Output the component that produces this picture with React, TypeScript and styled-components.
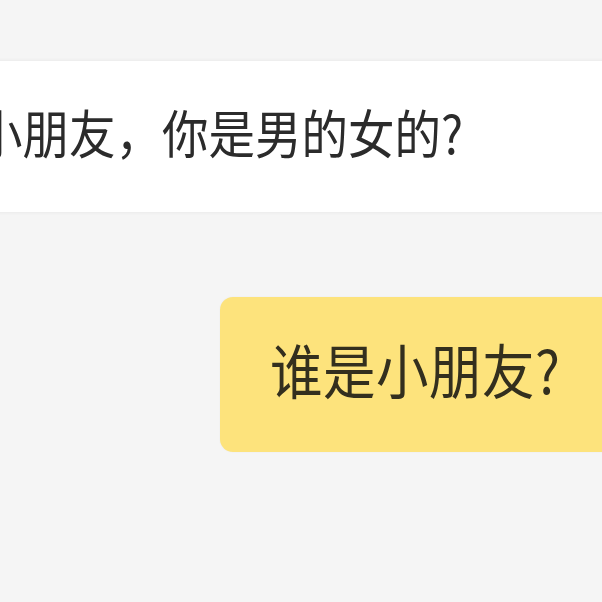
import styled, { createGlobalStyle } from "styled-components";

const GlobalStyle = createGlobalStyle`
  html, body {
    margin: 0;
    padding: 0;
    background: #f6f6f6;
  }
`;

type Message = {
  text: string;
  mine: boolean;
};

const messages: Message[] = [
  { text: "小朋友，你是男的女的?", mine: false },
  { text: "谁是小朋友?", mine: true },
];

const App = () => {
  return (
    <>
      <GlobalStyle />
      <Page>
        {messages.map((m, i) => (
          <Row key={i} $mine={m.mine}>
            <Bubble $mine={m.mine}>
              <Text $mine={m.mine}>{m.text}</Text>
            </Bubble>
          </Row>
        ))}
      </Page>
    </>
  );
};

export default App;

const Page = styled.div`
  width: 602px;
  height: 602px;
  overflow: hidden;
  box-sizing: border-box;
  padding-top: 61px;
  display: flex;
  flex-direction: column;
  gap: 85px;
  background: #f5f5f5;
  font-family: "Noto Sans CJK SC", "Noto Sans", sans-serif;
`;

const Row = styled.div<{ $mine: boolean }>`
  display: flex;
  justify-content: flex-start;
  padding-left: ${(p) => (p.$mine ? "220px" : "0")};
  margin-left: ${(p) => (p.$mine ? "0" : "-40px")};
`;

const Bubble = styled.div<{ $mine: boolean }>`
  flex: none;
  box-sizing: border-box;
  display: flex;
  align-items: center;
  white-space: nowrap;
  height: ${(p) => (p.$mine ? "155px" : "151px")};
  width: ${(p) => (p.$mine ? "420px" : "700px")};
  padding-left: ${(p) => (p.$mine ? "50px" : "16px")};
  padding-bottom: ${(p) => (p.$mine ? "12px" : "10px")};
  border-radius: 13px;
  background: ${(p) => (p.$mine ? "#fde37c" : "#ffffff")};
  box-shadow: ${(p) =>
    p.$mine ? "0 0 2px rgba(0, 0, 0, 0.05)" : "0 0 4px rgba(0, 0, 0, 0.07)"};
`;

const Text = styled.span<{ $mine: boolean }>`
  display: inline-block;
  font-size: ${(p) => (p.$mine ? "52.5px" : "46.5px")};
  letter-spacing: ${(p) => (p.$mine ? "0.5px" : "0")};
  line-height: 1;
  color: ${(p) => (p.$mine ? "#332f1e" : "#2b2b2b")};
  transform: scaleY(1.13);
  transform-origin: center;
`;
